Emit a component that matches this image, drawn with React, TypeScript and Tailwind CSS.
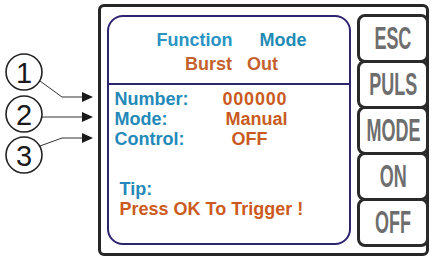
export default function App() {
  const buttons = ['ESC', 'PULS', 'MODE', 'ON', 'OFF'];

  return (
    <div className="w-[432px] h-[264px] bg-white flex font-['Liberation_Sans',Arial,sans-serif] overflow-hidden">
      {/* callouts 1-2-3 */}
      <Callouts />

      {/* device frame */}
      <div className="mt-[4px] w-[331px] h-[252px] shrink-0 border-[3px] border-[#262626] rounded-[6px] flex">
        {/* LCD screen */}
        <div className="ml-[6px] mt-[8px] w-[244px] h-[230px] shrink-0 border-[2.5px] border-[#2d2570] rounded-[16px] flex flex-col">
          <div className="h-[65.5px] pt-[10.5px] pl-[5px] font-bold text-[18px] leading-[24px]">
            <div className="flex justify-center gap-[27px] text-[#2a93c3]">
              <span>Function</span>
              <span className="text-[#1f8bb5]">Mode</span>
            </div>
            <div className="flex justify-center gap-[15px] text-[#c4612e]">
              <span>Burst</span>
              <span>Out</span>
            </div>
          </div>
          <div className="h-[2px] bg-[#2d2570]" />
          <div className="pt-[4.5px] pl-[5.5px] font-bold text-[18px] leading-[20px]">
            <Row label="Number:" value="000000" valueClass="ml-0 tracking-[0.8px]" />
            <Row label="Mode:" value="Manual" valueClass="ml-[3px]" />
            <Row label="Control:" value="OFF" valueClass="ml-[9px]" />
            <div className="mt-[29.5px] pl-[5px]">
              <div className="text-[#2489b9]">Tip:</div>
              <div className="text-[#cc5a20]">Press OK To Trigger !</div>
            </div>
          </div>
        </div>

        {/* side keys */}
        <div className="ml-[6px] mt-[7px] w-[72px] shrink-0 -mr-[3px] flex flex-col">
          {buttons.map((b, i) => (
            <div
              key={b}
              className={`h-[49px] border-[3px] border-[#2a2a2a] rounded-[8px] flex items-center justify-center bg-white ${
                i > 0 ? '-mt-[3px]' : ''
              }`}
            >
              <span className="inline-block scale-x-[0.58] scale-y-[1.04] text-[31px] leading-none font-bold text-[#6e6e6e]">{b}</span>
            </div>
          ))}
        </div>
      </div>
    </div>
  );
}

function Row({ label, value, valueClass }: { label: string; value: string; valueClass: string }) {
  return (
    <div className="flex">
      <span className="w-[108px] shrink-0 text-[#2489b9]">{label}</span>
      <span className={`text-[#c95b22] ${valueClass}`}>{value}</span>
    </div>
  );
}

function Callouts() {
  const circles = [
    { n: '1', cy: 72 },
    { n: '2', cy: 114 },
    { n: '3', cy: 155 },
  ];
  return (
    <svg width="98" height="264" viewBox="0 0 98 264" className="shrink-0">
      {circles.map((c) => (
        <g key={c.n}>
          <circle cx="24" cy={c.cy} r="18" fill="white" stroke="#222" strokeWidth="1.6" />
          <text
            x="24"
            y={c.cy + 10.5}
            textAnchor="middle"
            fontSize="29"
            fill="#1a1a1a"
            fontFamily="Liberation Sans, Arial, sans-serif"
          >
            {c.n}
          </text>
        </g>
      ))}
      <g stroke="#333" strokeWidth="1" fill="none">
        <polyline points="40,81 62,97 82,97" />
        <polyline points="42,117 82,117" />
        <polyline points="40,146 62,138 82,138" />
      </g>
      <g fill="#1a1a1a">
        <polygon points="82,92 93,97 82,102" />
        <polygon points="82,112 93,117 82,122" />
        <polygon points="82,133 93,138 82,143" />
      </g>
    </svg>
  );
}
